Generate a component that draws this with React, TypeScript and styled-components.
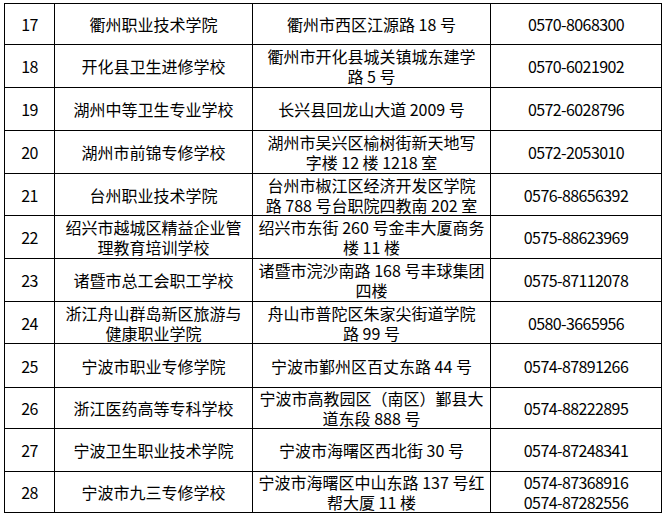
import React from 'react';
import styled, { createGlobalStyle } from 'styled-components';

interface School {
  no: number;
  name: string[];
  address: string[];
  phone: string[];
  height: number;
}

const rows: School[] = [
  { no: 17, name: ['衢州职业技术学院'], address: ['衢州市西区江源路 18 号'], phone: ['0570-8068300'], height: 41 },
  { no: 18, name: ['开化县卫生进修学校'], address: ['衢州市开化县城关镇城东建学', '路 5 号'], phone: ['0570-6021902'], height: 43 },
  { no: 19, name: ['湖州中等卫生专业学校'], address: ['长兴县回龙山大道 2009 号'], phone: ['0572-6028796'], height: 43 },
  { no: 20, name: ['湖州市前锦专修学校'], address: ['湖州市吴兴区榆树街新天地写', '字楼 12 楼 1218 室'], phone: ['0572-2053010'], height: 43 },
  { no: 21, name: ['台州职业技术学院'], address: ['台州市椒江区经济开发区学院', '路 788 号台职院四教南 202 室'], phone: ['0576-88656392'], height: 42 },
  { no: 22, name: ['绍兴市越城区精益企业管', '理教育培训学校'], address: ['绍兴市东街 260 号金丰大厦商务', '楼 11 楼'], phone: ['0575-88623969'], height: 43 },
  { no: 23, name: ['诸暨市总工会职工学校'], address: ['诸暨市浣沙南路 168 号丰球集团', '四楼'], phone: ['0575-87112078'], height: 43 },
  { no: 24, name: ['浙江舟山群岛新区旅游与', '健康职业学院'], address: ['舟山市普陀区朱家尖街道学院', '路 99 号'], phone: ['0580-3665956'], height: 42 },
  { no: 25, name: ['宁波市职业专修学院'], address: ['宁波市鄞州区百丈东路 44 号'], phone: ['0574-87891266'], height: 44 },
  { no: 26, name: ['浙江医药高等专科学校'], address: ['宁波市高教园区（南区）鄞县大', '道东段 888 号'], phone: ['0574-88222895'], height: 41 },
  { no: 27, name: ['宁波卫生职业技术学院'], address: ['宁波市海曙区西北街 30 号'], phone: ['0574-87248341'], height: 43 },
  { no: 28, name: ['宁波市九三专修学校'], address: ['宁波市海曙区中山东路 137 号红', '帮大厦 11 楼'], phone: ['0574-87368916', '0574-87282556'], height: 41 },
];

const GlobalStyle = createGlobalStyle`
  html, body {
    margin: 0;
    padding: 0;
    background: #fff;
  }
  body {
    font-family: "Noto Sans CJK SC", "Liberation Sans", sans-serif;
    color: #000;
  }
`;

const Page = styled.div`
  padding: 3px 0 0 4px;
`;

const Table = styled.table`
  border-collapse: collapse;
  table-layout: fixed;
  width: 658px;
`;

const Row = styled.tr<{ $h: number }>`
  height: ${(p) => p.$h}px;
`;

const Cell = styled.td<{ $tight?: boolean }>`
  border: 1px solid #000;
  padding: 0;
  text-align: center;
  vertical-align: middle;
  font-size: 16px;
  line-height: 20px;
  white-space: nowrap;
  overflow: visible;
  letter-spacing: ${(p) => (p.$tight ? '-0.6px' : '0')};
`;

const Line = styled.div`
  display: block;
`;

const Lines: React.FC<{ items: string[] }> = ({ items }) => (
  <>
    {items.map((t, i) => (
      <Line key={i}>{t}</Line>
    ))}
  </>
);

export default function App() {
  return (
    <Page>
      <GlobalStyle />
      <Table>
        <colgroup>
          <col style={{ width: 50 }} />
          <col style={{ width: 198 }} />
          <col style={{ width: 238 }} />
          <col style={{ width: 171 }} />
        </colgroup>
        <tbody>
          {rows.map((r) => (
            <Row key={r.no} $h={r.height}>
              <Cell $tight>{r.no}</Cell>
              <Cell>
                <Lines items={r.name} />
              </Cell>
              <Cell>
                <Lines items={r.address} />
              </Cell>
              <Cell $tight>
                <Lines items={r.phone} />
              </Cell>
            </Row>
          ))}
        </tbody>
      </Table>
    </Page>
  );
}
